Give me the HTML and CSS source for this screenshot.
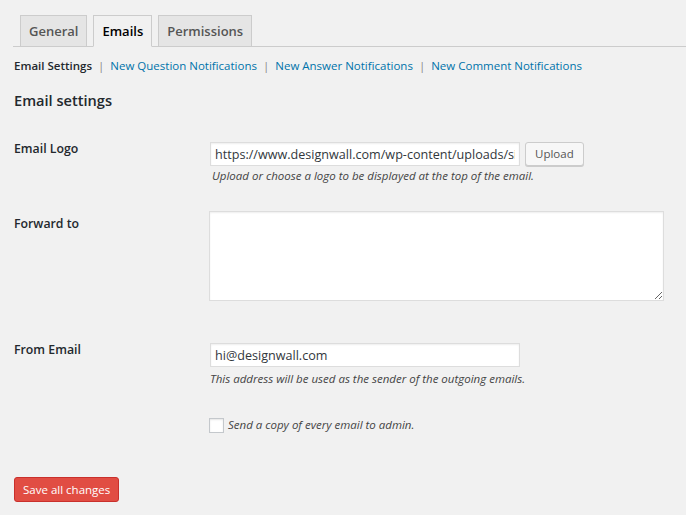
FILE: index.html
```html
<!DOCTYPE html>
<html>
<head>
<meta charset="utf-8">
<link rel="stylesheet" href="styles.css">
</head>
<body>
<div class="tabs">
  <a class="tab">General</a>
  <a class="tab tab-active">Emails</a>
  <a class="tab">Permissions</a>
</div>
<div class="subnav">
  <span class="current">Email Settings</span><span class="sep">|</span><a class="link">New Question Notifications</a><span class="sep">|</span><a class="link">New Answer Notifications</a><span class="sep">|</span><a class="link">New Comment Notifications</a>
</div>
<h2 class="title">Email settings</h2>

<div class="row row-logo">
  <div class="label">Email Logo</div>
  <div class="field">
    <div class="inline">
      <input class="text" type="text" value="https://www.designwall.com/wp-content/uploads/sites/logo.png">
      <button class="btn">Upload</button>
    </div>
    <p class="desc">Upload or choose a logo to be displayed at the top of the email.</p>
  </div>
</div>

<div class="row row-forward">
  <div class="label label-area">Forward to</div>
  <div class="field field-area">
    <textarea class="area"></textarea>
  </div>
</div>

<div class="row row-from">
  <div class="label">From Email</div>
  <div class="field">
    <input class="text" type="text" value="hi@designwall.com">
    <p class="desc desc-from">This address will be used as the sender of the outgoing emails.</p>
  </div>
</div>

<div class="row row-check">
  <div></div>
  <label class="check"><input class="box" type="checkbox"><span>Send a copy of every email to admin.</span></label>
</div>

<div class="actions">
  <button class="save">Save all changes</button>
</div>
</body>
</html>
```

FILE: styles.css
```css
html, body {
  margin: 0;
  padding: 0;
  background: #f1f1f1;
  font-family: "Open Sans", "Noto Sans", sans-serif;
  color: #23282d;
  font-size: 13px;
}

.tabs {
  margin-left: 13px;
  padding-top: 15px;
  border-bottom: 1px solid #ccc;
  display: flex;
  gap: 6px;
  padding-left: 7px;
}

.tab {
  display: block;
  border: 1px solid #ccc;
  background: #e5e5e5;
  color: #555;
  font-size: 13px;
  font-weight: 600;
  line-height: 20px;
  padding: 5px 8px;
  margin-bottom: -1px;
}

.tab-active {
  background: #f1f1f1;
  border-bottom-color: #f1f1f1;
  color: #000;
}

.subnav {
  margin: 10px 0 0 14px;
  line-height: 18px;
  font-size: 11.5px;
  color: #666;
}

.current {
  font-weight: 600;
  color: #23282d;
}

.sep {
  margin: 0 6px 0 6px;
  color: #888;
}

.link {
  color: #0073aa;
}

.title {
  margin: 14px 0 0 14px;
  font-size: 14.6px;
  line-height: 22px;
  font-weight: 600;
  color: #23282d;
}

.row {
  display: grid;
  grid-template-columns: 196px 1fr;
  margin-left: 14px;
}

.row-logo { margin-top: 29px; }
.row-forward { margin-top: 26px; }
.row-from { margin-top: 40px; }
.row-check { margin-top: 29px; }

.label {
  font-size: 12.3px;
  line-height: 18px;
  font-weight: 600;
  color: #23282d;
}

.label-area { padding-top: 4px; }

.field { padding-top: 2px; }
.field-area { padding-top: 0; }

.inline {
  display: flex;
  gap: 5px;
}

.text {
  box-sizing: border-box;
  width: 310px;
  height: 24px;
  margin: 0;
  padding: 0 4px;
  border: 1px solid #ddd;
  box-shadow: inset 0 1px 2px rgba(0, 0, 0, 0.07);
  background: #fff;
  color: #32373c;
  font-family: "Open Sans", "Noto Sans", sans-serif;
  font-size: 12.6px;
  outline: none;
}

.btn {
  box-sizing: border-box;
  height: 24px;
  margin: 0;
  padding: 0 9px;
  border: 1px solid #ccc;
  border-radius: 3px;
  background: #f7f7f7;
  box-shadow: 0 1px 0 #ccc;
  color: #555;
  font-family: "Open Sans", "Noto Sans", sans-serif;
  font-size: 11.5px;
  line-height: 22px;
}

.desc {
  margin: 1px 0 0 2px;
  font-size: 11.5px;
  line-height: 18px;
  font-style: italic;
  color: #444;
}

.desc-from { margin-left: 0; margin-top: 3px; }

.area {
  display: block;
  box-sizing: border-box;
  width: 455px;
  height: 90px;
  margin: 0 0 0 -1px;
  border: 1px solid #ddd;
  box-shadow: inset 0 1px 2px rgba(0, 0, 0, 0.07);
  background: #fff;
  outline: none;
}

.check {
  display: flex;
  align-items: center;
  gap: 4px;
  margin-left: -1px;
  font-size: 11.5px;
  line-height: 16px;
  font-style: italic;
  color: #444;
}

.box {
  appearance: none;
  -webkit-appearance: none;
  box-sizing: border-box;
  width: 15px;
  height: 15px;
  margin: 0;
  border: 1px solid #c4c8cc;
  background: #fff;
  box-shadow: inset 0 1px 2px rgba(0, 0, 0, 0.1);
}

.actions {
  margin: 44px 0 0 14px;
}

.save {
  box-sizing: border-box;
  height: 25px;
  padding: 0 8px;
  border: 1px solid #c9302c;
  border-radius: 3px;
  background: #e14d43;
  color: #fff;
  font-family: "Open Sans", "Noto Sans", sans-serif;
  font-size: 11.5px;
  line-height: 23px;
}
```
